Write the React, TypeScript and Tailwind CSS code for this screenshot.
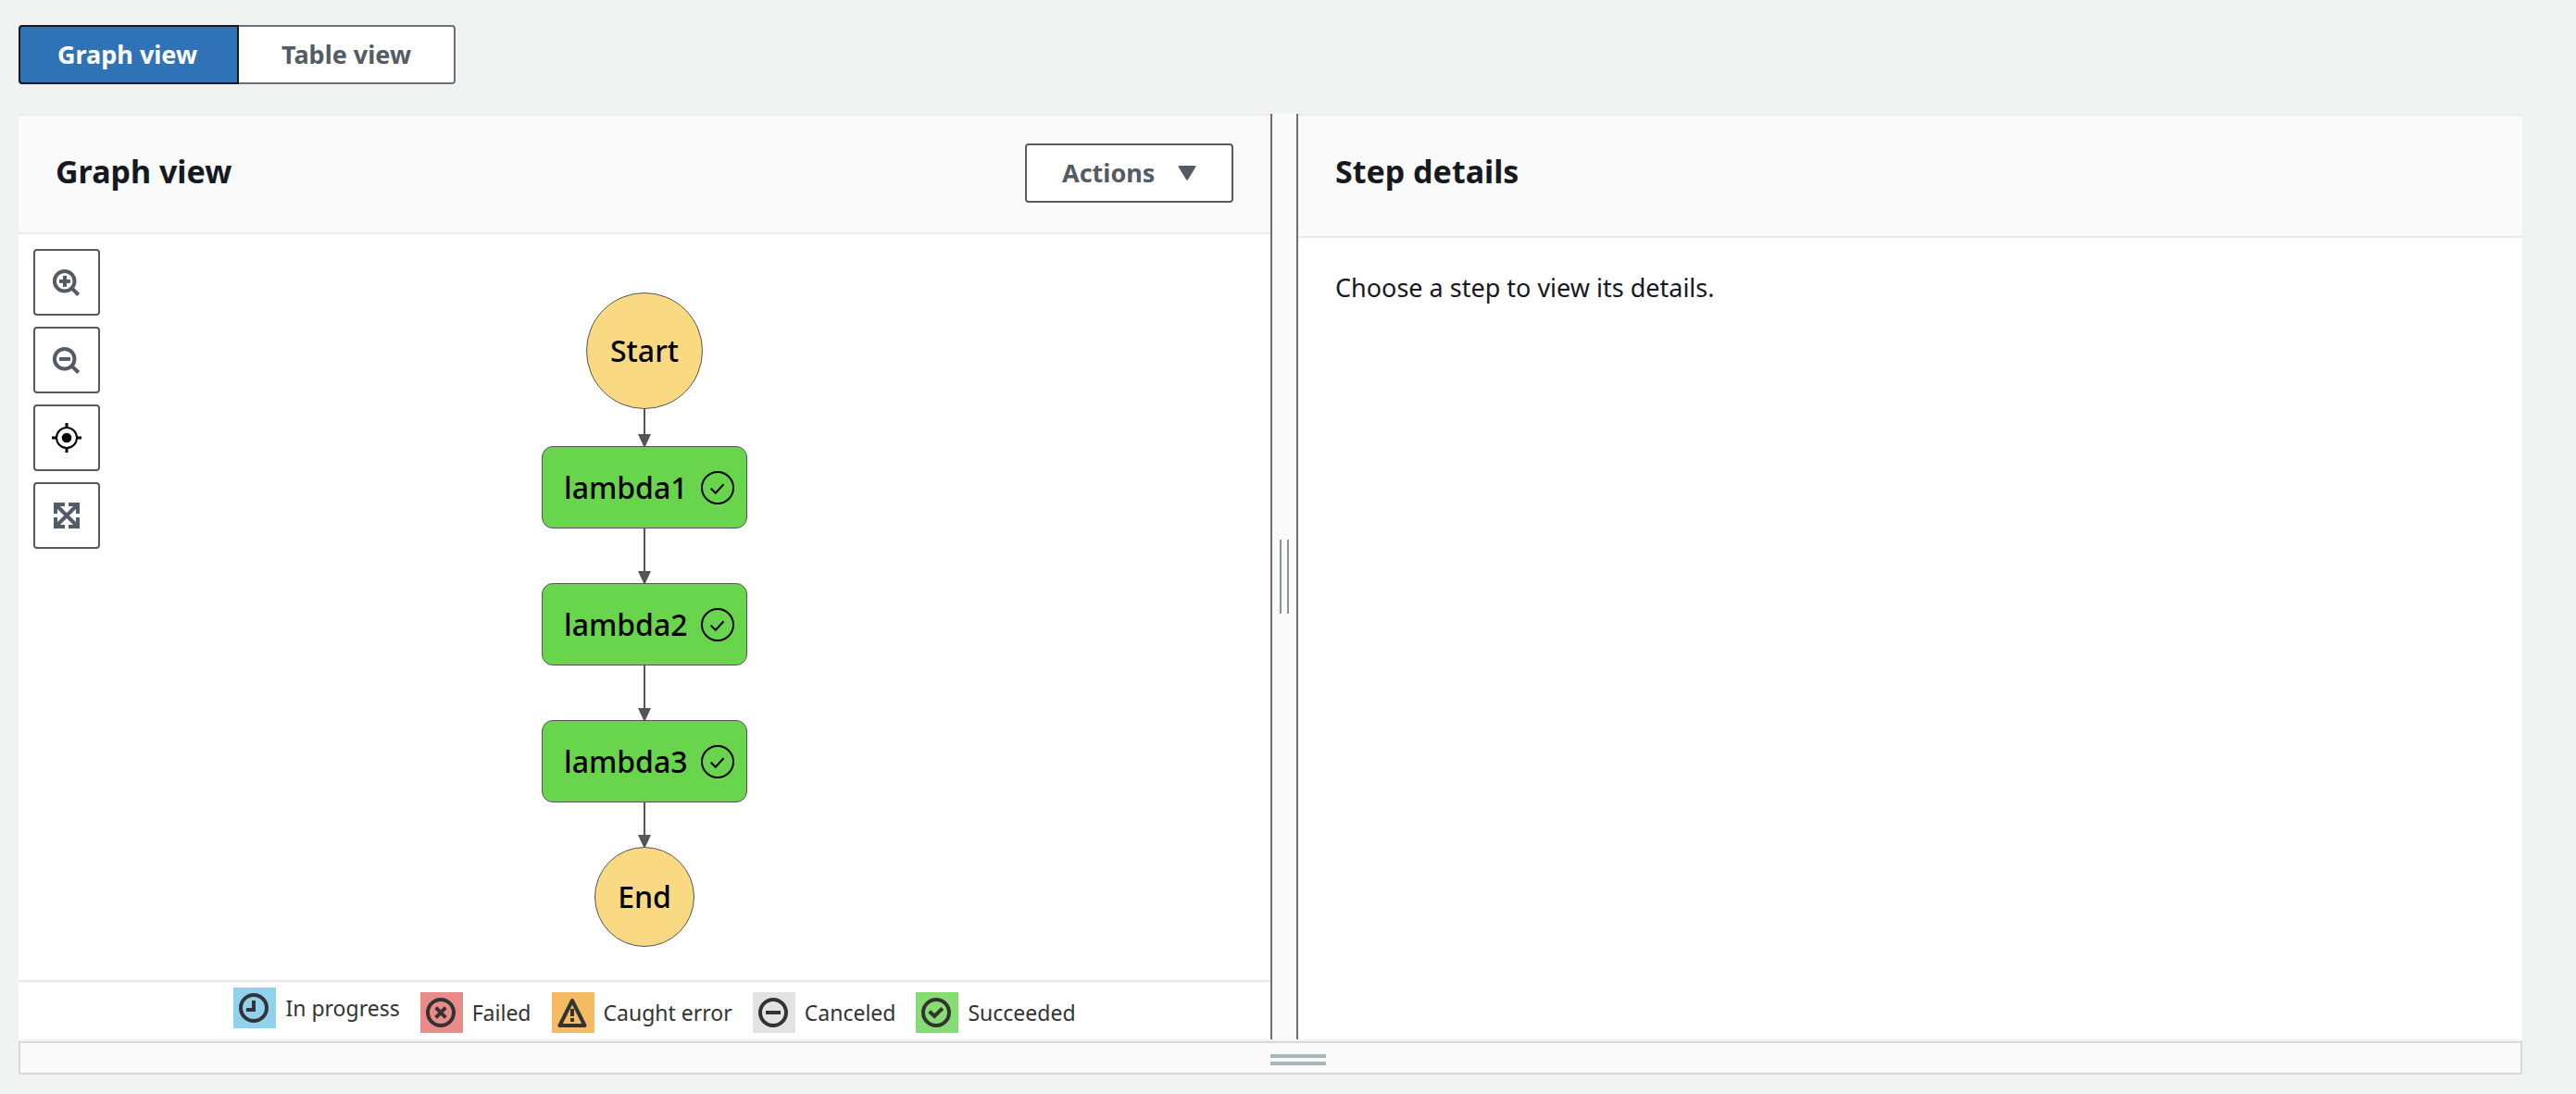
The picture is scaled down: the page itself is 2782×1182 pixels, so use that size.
import type { ReactNode } from "react";

function ZoomGlyph({ plus }: { plus?: boolean }) {
  return (
    <svg viewBox="0 0 32 32" className="size-8" fill="none" stroke="#545b64" strokeWidth="4" aria-hidden="true">
      <circle cx="13.7" cy="14.7" r="10.8" />
      <path d="M21.3 22.3l7.5 7.2" />
      <path d="M8 14.9h12" />
      {plus && <path d="M14 8.9v12" />}
    </svg>
  );
}

function TargetGlyph() {
  return (
    <svg viewBox="0 0 32 32" className="size-8" fill="none" stroke="#000" aria-hidden="true">
      <circle cx="16" cy="16" r="11" strokeWidth="2" />
      <circle cx="16" cy="16" r="5.3" fill="#000" stroke="none" />
      <path d="M16 0v5M16 27v5M0 16h5M27 16h5" strokeWidth="3" />
    </svg>
  );
}

function ExpandGlyph() {
  return (
    <svg viewBox="0 0 32 32" className="size-8" fill="none" stroke="#545b64" strokeWidth="4" aria-hidden="true">
      <path d="M4 14V4h10M18 4h10v10M28 18v10H18M14 28H4V18" />
      <path d="M4 4l24 24M28 4L4 28" />
    </svg>
  );
}

function ToolButton({ label, children }: { label: string; children: ReactNode }) {
  return (
    <button
      type="button"
      aria-label={label}
      className="flex size-[72px] items-center justify-center rounded-[4px] border-2 border-[#545b64] bg-white"
    >
      {children}
    </button>
  );
}

function Connector({ className }: { className: string }) {
  return (
    <div className={`flex flex-col items-center ${className}`}>
      <div className="w-0.5 flex-1 bg-[#545454]" />
      <svg viewBox="0 0 14 13" className="h-[13px] w-3.5" aria-hidden="true">
        <path d="M0 0h14L8 13H6z" fill="#545454" />
      </svg>
    </div>
  );
}

function StateNode({ name }: { name: string }) {
  return (
    <button
      type="button"
      className="flex h-[89px] w-[222px] items-center justify-between rounded-xl border border-[#545454] bg-[#69d54d] pr-[13px] pl-[23px] text-[32px] leading-10 font-medium text-black"
    >
      {name}
      <svg viewBox="0 0 36 36" className="size-9" fill="none" stroke="#000" strokeWidth="2" aria-hidden="true">
        <circle cx="18" cy="18" r="17" />
        <path d="M10.7 18.7l5.1 5L24.5 14.3" />
      </svg>
    </button>
  );
}

const legend: { label: string; swatch: string; item: string; glyph: ReactNode }[] = [
  {
    label: "In progress",
    swatch: "bg-[#90d1ee]",
    item: "self-start",
    glyph: (
      <>
        <circle cx="16" cy="16" r="14" />
        <path d="M16 8v10H8" />
      </>
    ),
  },
  {
    label: "Failed",
    swatch: "bg-[#e98b88]",
    item: "self-end",
    glyph: (
      <>
        <circle cx="16" cy="16" r="14" />
        <path d="M10.7 10.7l10.6 10.6M21.3 10.7L10.7 21.3" />
      </>
    ),
  },
  {
    label: "Caught error",
    swatch: "bg-[#f6ba62]",
    item: "self-end",
    glyph: (
      <>
        <path d="M16 3L2.5 30h27z" strokeLinejoin="round" />
        <path d="M16 12v8M16 22v4" />
      </>
    ),
  },
  {
    label: "Canceled",
    swatch: "bg-[#e3e3e3]",
    item: "self-end",
    glyph: (
      <>
        <circle cx="16" cy="16" r="14" />
        <path d="M8 16h16" />
      </>
    ),
  },
  {
    label: "Succeeded",
    swatch: "bg-[#86dd71]",
    item: "self-end",
    glyph: (
      <>
        <circle cx="16" cy="16" r="14" />
        <path d="M8.7 14.7l5.5 5.3 8.6-8.5" />
      </>
    ),
  },
];

export default function App() {
  return (
    <div className="min-h-screen bg-[#f1f3f3] pt-[27px] pr-[58px] pb-5 pl-5 font-['Noto_Sans',sans-serif] text-[27px] leading-[44px] text-[#16191f]">
      <div className="flex font-bold">
        <button
          type="button"
          aria-pressed="true"
          className="h-16 min-w-[238px] rounded-l-[4px] border-2 border-[#16191f] bg-[#3072b6] px-10 text-left text-white"
        >
          Graph view
        </button>
        <button
          type="button"
          aria-pressed="false"
          className="h-16 min-w-[234px] rounded-r-[4px] border-2 border-l-0 border-[#6b717b] bg-white px-10 text-center text-[#545b64]"
        >
          Table view
        </button>
      </div>

      <main className="mt-8 flex">
        <section className="flex min-w-0 grow-[1352] basis-0 flex-col bg-white">
          <header className="flex items-start justify-between border-y-2 border-[#eaebeb] bg-[#fafafa] px-10 pt-[30px] pb-8">
            <h2 className="text-[34px] leading-[60px] font-bold">Graph view</h2>
            <button
              type="button"
              className="flex h-16 min-w-[225px] items-center justify-between rounded-[4px] border-2 border-[#545b64] bg-white px-[38px] font-bold text-[#545b64]"
            >
              Actions
              <svg viewBox="0 0 20 16" className="h-4 w-5" aria-hidden="true">
                <path d="M1.500 0h17Q20 0 19.300 1.500L11 15q-1 1.500-2 0L.7 1.500Q0 0 1.500 0z" fill="#545b64" />
              </svg>
            </button>
          </header>

          <div className="relative flex flex-1 flex-col items-center pt-[63px] pb-9">
            <div className="absolute top-4 left-4 flex flex-col gap-3">
              <ToolButton label="Zoom in">
                <ZoomGlyph plus />
              </ToolButton>
              <ToolButton label="Zoom out">
                <ZoomGlyph />
              </ToolButton>
              <ToolButton label="Center graph">
                <TargetGlyph />
              </ToolButton>
              <ToolButton label="Full screen">
                <ExpandGlyph />
              </ToolButton>
            </div>

            <div className="flex size-[126px] items-center justify-center rounded-full border border-[#545454] bg-[#f9da83] text-[32px] font-medium text-black">
              Start
            </div>
            <Connector className="h-10" />
            <StateNode name="lambda1" />
            <Connector className="h-[59px]" />
            <StateNode name="lambda2" />
            <Connector className="h-[59px]" />
            <StateNode name="lambda3" />
            <Connector className="h-12" />
            <div className="flex size-[108px] items-center justify-center rounded-full border border-[#545454] bg-[#f9da83] text-[32px] font-medium text-black">
              End
            </div>
          </div>

          <footer className="border-t-2 border-[#e7e7e7] pt-1.5 pb-[7px] pl-[22px]">
            <ul className="flex h-[49px] justify-center gap-[22px] text-[23px] text-[#333]">
              {legend.map((entry) => (
                <li key={entry.label} className={`flex h-11 items-center gap-2.5 ${entry.item}`}>
                  <span className={`h-11 w-[46px] p-1.5 ${entry.swatch}`}>
                    <svg viewBox="0 0 32 32" className="size-8" fill="none" stroke="#333" strokeWidth="4" aria-hidden="true">
                      {entry.glyph}
                    </svg>
                  </span>
                  {entry.label}
                </li>
              ))}
            </ul>
          </footer>
        </section>

        <div
          role="separator"
          aria-orientation="vertical"
          className="flex w-[30px] items-center justify-center gap-1.5 border-x-2 border-[#687078] bg-[#fafafa]"
        >
          <span className="h-20 w-0.5 bg-[#879596]" />
          <span className="h-20 w-0.5 bg-[#879596]" />
        </div>

        <section className="min-w-0 grow-[1322] basis-0 bg-white">
          <header className="border-y-2 border-[#eaebeb] bg-[#fafafa] px-10 pt-[30px] pb-10">
            <h2 className="text-[34px] leading-[60px] font-bold">Step details</h2>
          </header>
          <p className="px-10 pt-8">Choose a step to view its details.</p>
        </section>
      </main>

      <div
        role="separator"
        aria-orientation="horizontal"
        className="mt-0.5 grid h-9 grid-cols-2 items-center border-2 border-[#d5dbdb] bg-[#fafafa]"
      >
        <span className="col-start-2 flex w-[60px] flex-col gap-1 pt-1">
          <span className="h-1 bg-[#aab7b8]" />
          <span className="h-1 bg-[#aab7b8]" />
        </span>
      </div>
    </div>
  );
}
